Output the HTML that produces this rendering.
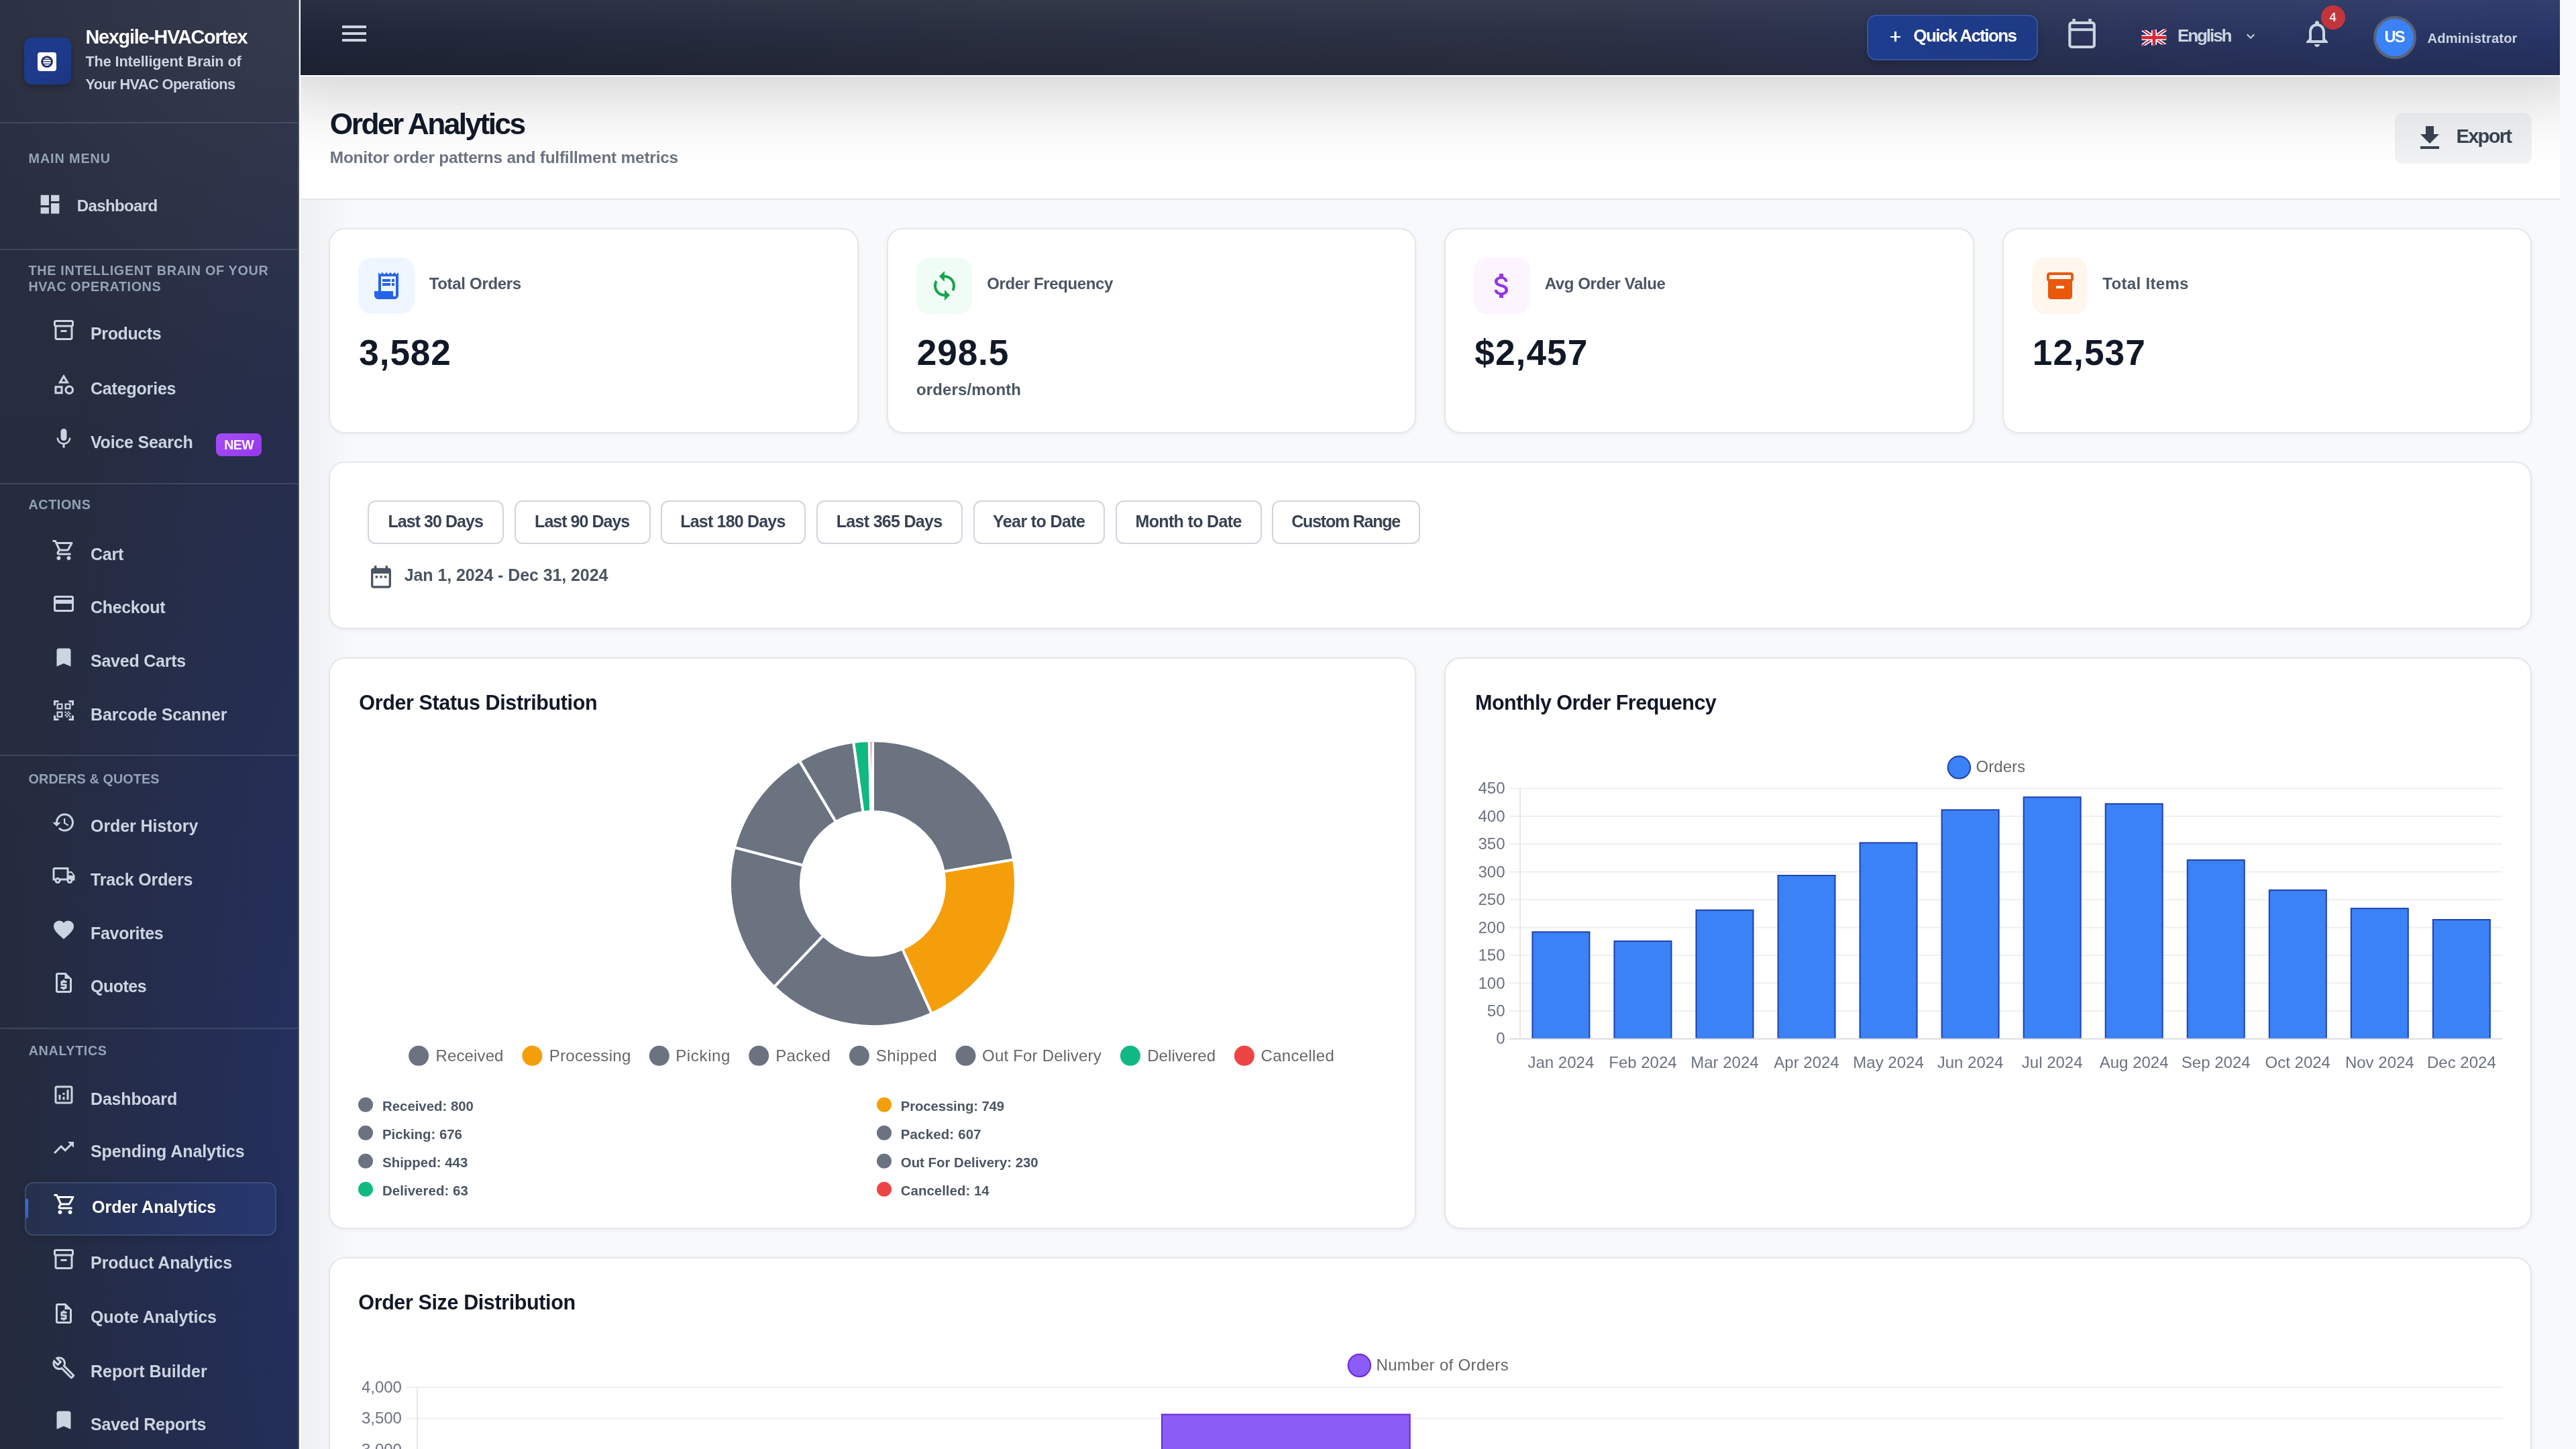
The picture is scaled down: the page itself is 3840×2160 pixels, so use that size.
<!DOCTYPE html><html><head><meta charset="utf-8"><title>Order Analytics</title><style>
*{margin:0;padding:0;box-sizing:border-box}
html,body{width:3840px;height:2160px;overflow:hidden;background:#f8f9fb}
body{position:relative;font-family:"Liberation Sans",sans-serif}
.t{position:absolute;white-space:nowrap;font-family:"Liberation Sans",sans-serif}
.b{position:absolute}
.i{position:absolute;overflow:visible}
svg.abs{position:absolute}
#root{position:absolute;left:0;top:0;width:3840px;height:2160px;will-change:transform}
</style></head><body><div id="root"><div class="b" style="left:0px;top:0px;width:444px;height:2160px;background:radial-gradient(ellipse 540px 1750px at 540px 1750px, rgba(36,50,112,0.80) 0%, rgba(36,50,112,0.38) 50%, rgba(36,50,112,0) 100%),radial-gradient(ellipse 520px 600px at 446px 0px, rgba(62,68,86,0.55) 0%, rgba(62,68,86,0) 100%),linear-gradient(180deg,#2a2f41 0%,#262c3e 35%,#232a3c 100%);"></div>
<div class="b" style="left:444px;top:0px;width:2px;height:2160px;background:#4a505e;"></div>
<div class="b" style="left:446px;top:0px;width:2px;height:2160px;background:#ffffff;"></div>
<div class="b" style="left:36px;top:56px;width:70px;height:70px;border-radius:12px;background:linear-gradient(135deg,#1d3b8e,#1e3a8a 60%,#1c3580);box-shadow:0 4px 10px rgba(0,0,0,0.25);"></div>
<div class="b" style="left:56px;top:78px;width:28px;height:28px;border-radius:4px;background:#fff;"></div>
<svg class="abs" style="left:56px;top:78px;width:28px;height:28px" viewBox="56 78 28 28"><defs><clipPath id="lc"><circle cx="70.05" cy="92" r="6.2"/></clipPath></defs><circle cx="70.05" cy="92" r="7.45" fill="#fff" stroke="#1e2a6b" stroke-width="2.8"/><g clip-path="url(#lc)" stroke="#1e2a6b" stroke-width="1.2"><line x1="60" y1="88.4" x2="80" y2="88.4"/><line x1="60" y1="91.8" x2="80" y2="91.8"/><line x1="60" y1="95.3" x2="80" y2="95.3"/></g></svg>
<div class="t" style="left:127.40px;top:41.32px;font-size:28.8px;line-height:28.8px;color:#ffffff;font-weight:700;letter-spacing:-1.231px;">Nexgile-HVACortex</div>
<div class="t" style="left:127.40px;top:80.85px;font-size:21.8px;line-height:21.8px;color:#cbd5e1;font-weight:700;letter-spacing:-0.161px;">The Intelligent Brain of</div>
<div class="t" style="left:127.40px;top:114.85px;font-size:21.8px;line-height:21.8px;color:#cbd5e1;font-weight:700;letter-spacing:-0.611px;">Your HVAC Operations</div>
<div class="b" style="left:0px;top:182px;width:444px;height:2px;background:rgba(148,163,184,0.22);"></div>
<div class="b" style="left:0px;top:371px;width:444px;height:2px;background:rgba(148,163,184,0.22);"></div>
<div class="b" style="left:0px;top:720px;width:444px;height:2px;background:rgba(148,163,184,0.22);"></div>
<div class="b" style="left:0px;top:1125px;width:444px;height:2px;background:rgba(148,163,184,0.22);"></div>
<div class="b" style="left:0px;top:1532px;width:444px;height:2px;background:rgba(148,163,184,0.22);"></div>
<div class="t" style="left:42.50px;top:227.14px;font-size:19.8px;line-height:19.8px;color:#94a3b8;font-weight:700;letter-spacing:0.912px;">MAIN MENU</div>
<div class="t" style="left:42.50px;top:393.74px;font-size:19.8px;line-height:19.8px;color:#94a3b8;font-weight:700;letter-spacing:0.686px;">THE INTELLIGENT BRAIN OF YOUR</div>
<div class="t" style="left:42.50px;top:418.04px;font-size:19.8px;line-height:19.8px;color:#94a3b8;font-weight:700;letter-spacing:0.550px;">HVAC OPERATIONS</div>
<div class="t" style="left:42.50px;top:743.24px;font-size:19.8px;line-height:19.8px;color:#94a3b8;font-weight:700;letter-spacing:0.567px;">ACTIONS</div>
<div class="t" style="left:42.50px;top:1152.04px;font-size:19.8px;line-height:19.8px;color:#94a3b8;font-weight:700;letter-spacing:0.114px;">ORDERS &amp; QUOTES</div>
<div class="t" style="left:42.70px;top:1557.44px;font-size:19.8px;line-height:19.8px;color:#94a3b8;font-weight:700;letter-spacing:0.625px;">ANALYTICS</div>
<svg class="i" style="left:55.70px;top:285.90px;width:37px;height:37px;" viewBox="0 0 24 24"><path fill="#cbd5e1" d="M3 13h8V3H3v10zm0 8h8v-6H3v6zm10 0h8V11h-8v10zm0-18v6h8V3h-8z"/></svg>
<div class="t" style="left:114.70px;top:295.38px;font-size:24px;line-height:24px;color:#cbd5e1;font-weight:700;letter-spacing:-0.613px;">Dashboard</div>
<svg class="i" style="left:77.00px;top:473.80px;width:36px;height:36px;" viewBox="0 0 24 24"><path fill="#cbd5e1" d="M20 2H4c-1 0-2 .9-2 2v3.01c0 .72.43 1.34 1 1.69V20c0 1.1 1.1 2 2 2h14c.9 0 2-.9 2-2V8.7c.57-.35 1-.97 1-1.69V4c0-1.1-1-2-2-2zm-1 18H5V9h14v11zm1-13H4V4h16v3zM9 12h6v2H9z"/></svg>
<div class="t" style="left:135.00px;top:485.14px;font-size:25px;line-height:25px;color:#cbd5e1;font-weight:700;letter-spacing:-0.386px;">Products</div>
<svg class="i" style="left:77.00px;top:555.30px;width:36px;height:36px;" viewBox="0 0 24 24"><path fill="#cbd5e1" d="M12 2l-5.5 9h11L12 2zm0 3.84L13.93 9h-3.87L12 5.84zM17.5 13c-2.49 0-4.5 2.01-4.5 4.5s2.01 4.5 4.5 4.5 4.5-2.01 4.5-4.5-2.01-4.5-4.5-4.5zm0 7c-1.38 0-2.5-1.12-2.5-2.5s1.12-2.5 2.5-2.5 2.5 1.12 2.5 2.5-1.12 2.5-2.5 2.5zM3 21.5h8v-8H3v8zm2-6h4v4H5v-4z"/></svg>
<div class="t" style="left:135.00px;top:566.64px;font-size:25px;line-height:25px;color:#cbd5e1;font-weight:700;letter-spacing:-0.189px;">Categories</div>
<svg class="i" style="left:77.00px;top:635.50px;width:36px;height:36px;" viewBox="0 0 24 24"><path fill="#cbd5e1" d="M12 14c1.66 0 2.99-1.34 2.99-3L15 5c0-1.66-1.34-3-3-3S9 3.34 9 5v6c0 1.66 1.34 3 3 3zm5.3-3c0 3-2.54 5.1-5.3 5.1S6.7 14 6.7 11H5c0 3.41 2.72 6.23 6 6.72V21h2v-3.28c3.28-.48 6-3.3 6-6.72h-1.7z"/></svg>
<div class="t" style="left:135.00px;top:646.84px;font-size:25px;line-height:25px;color:#cbd5e1;font-weight:700;letter-spacing:-0.218px;">Voice Search</div>
<svg class="i" style="left:77.00px;top:802.30px;width:36px;height:36px;" viewBox="0 0 24 24"><path fill="#cbd5e1" d="M15.55 13c.75 0 1.41-.41 1.75-1.03l3.58-6.49c.37-.66-.11-1.48-.87-1.48H5.21l-.94-2H1v2h2l3.6 7.59-1.35 2.44C4.52 15.37 5.48 17 7 17h12v-2H7l1.1-2h7.45zM6.16 6h12.15l-2.76 5H8.53L6.16 6zM7 18c-1.1 0-1.99.9-1.99 2S5.9 22 7 22s2-.9 2-2-.9-2-2-2zm10 0c-1.1 0-1.99.9-1.99 2s.89 2 1.99 2 2-.9 2-2-.9-2-2-2z"/></svg>
<div class="t" style="left:135.00px;top:813.64px;font-size:25px;line-height:25px;color:#cbd5e1;font-weight:700;letter-spacing:-0.233px;">Cart</div>
<svg class="i" style="left:77.00px;top:881.80px;width:36px;height:36px;" viewBox="0 0 24 24"><path fill="#cbd5e1" d="M20 4H4c-1.11 0-1.99.89-1.99 2L2 18c0 1.11.89 2 2 2h16c1.11 0 2-.89 2-2V6c0-1.11-.89-2-2-2zm0 14H4v-6h16v6zm0-10H4V6h16v2z"/></svg>
<div class="t" style="left:135.00px;top:893.14px;font-size:25px;line-height:25px;color:#cbd5e1;font-weight:700;letter-spacing:-0.343px;">Checkout</div>
<svg class="i" style="left:77.00px;top:961.50px;width:36px;height:36px;" viewBox="0 0 24 24"><path fill="#cbd5e1" d="M17 3H7c-1.1 0-1.99.9-1.99 2L5 21l7-3 7 3V5c0-1.1-.9-2-2-2z"/></svg>
<div class="t" style="left:135.00px;top:972.84px;font-size:25px;line-height:25px;color:#cbd5e1;font-weight:700;letter-spacing:-0.230px;">Saved Carts</div>
<svg class="i" style="left:77.00px;top:1041.20px;width:36px;height:36px;" viewBox="0 0 24 24"><path fill="#cbd5e1" d="M9.5 6.5v3h-3v-3h3M11 5H5v6h6V5zm-1.5 9.5v3h-3v-3h3M11 13H5v6h6v-6zm6.5-6.5v3h-3v-3h3M19 5h-6v6h6V5zm-6 8h1.5v1.5H13V13zm1.5 1.5H16V16h-1.5v-1.5zM16 13h1.5v1.5H16V13zm-3 3h1.5v1.5H13V16zm1.5 1.5H16V19h-1.5v-1.5zM16 16h1.5v1.5H16V16zm1.5-1.5H19V16h-1.5v-1.5zm0 3H19V19h-1.5v-1.5zM22 7h-2V4h-3V2h5v5zm0 15v-5h-2v3h-3v2h5zM2 22h5v-2H4v-3H2v5zM2 2v5h2V4h3V2H2z"/></svg>
<div class="t" style="left:135.00px;top:1052.54px;font-size:25px;line-height:25px;color:#cbd5e1;font-weight:700;letter-spacing:-0.150px;">Barcode Scanner</div>
<svg class="i" style="left:77.00px;top:1207.50px;width:36px;height:36px;" viewBox="0 0 24 24"><path fill="#cbd5e1" d="M13 3c-4.97 0-9 4.03-9 9H1l3.89 3.89.07.14L9 12H6c0-3.87 3.13-7 7-7s7 3.13 7 7-3.13 7-7 7c-1.93 0-3.68-.79-4.94-2.06l-1.42 1.42C8.27 19.99 10.51 21 13 21c4.97 0 9-4.03 9-9s-4.03-9-9-9zm-1 5v5l4.28 2.54.72-1.21-3.5-2.08V8H12z"/></svg>
<div class="t" style="left:135.00px;top:1218.84px;font-size:25px;line-height:25px;color:#cbd5e1;font-weight:700;letter-spacing:-0.067px;">Order History</div>
<svg class="i" style="left:77.00px;top:1287.20px;width:36px;height:36px;" viewBox="0 0 24 24"><path fill="#cbd5e1" d="M20 8h-3V4H3c-1.1 0-2 .9-2 2v11h2c0 1.66 1.34 3 3 3s3-1.34 3-3h6c0 1.66 1.34 3 3 3s3-1.34 3-3h2v-5l-3-4zm-.5 1.5l1.96 2.5H17V9.5h2.5zM6 18c-.55 0-1-.45-1-1s.45-1 1-1 1 .45 1 1-.45 1-1 1zm2.22-3c-.55-.61-1.33-1-2.22-1s-1.67.39-2.22 1H3V6h12v9H8.22zM18 18c-.55 0-1-.45-1-1s.45-1 1-1 1 .45 1 1-.45 1-1 1z"/></svg>
<div class="t" style="left:135.00px;top:1298.54px;font-size:25px;line-height:25px;color:#cbd5e1;font-weight:700;letter-spacing:-0.164px;">Track Orders</div>
<svg class="i" style="left:77.00px;top:1367.50px;width:36px;height:36px;" viewBox="0 0 24 24"><path fill="#cbd5e1" d="M12 21.35l-1.45-1.32C5.4 15.36 2 12.28 2 8.5 2 5.42 4.42 3 7.5 3c1.74 0 3.41.81 4.5 2.09C13.09 3.81 14.76 3 16.5 3 19.58 3 22 5.42 22 8.5c0 3.78-3.4 6.86-8.55 11.54L12 21.35z"/></svg>
<div class="t" style="left:135.00px;top:1378.84px;font-size:25px;line-height:25px;color:#cbd5e1;font-weight:700;letter-spacing:-0.300px;">Favorites</div>
<svg class="i" style="left:77.00px;top:1446.90px;width:36px;height:36px;" viewBox="0 0 24 24"><path fill="#cbd5e1" d="M14 2H6c-1.1 0-1.99.9-1.99 2L4 20c0 1.1.89 2 1.99 2H18c1.1 0 2-.9 2-2V8l-6-6zM6 20V4h7v4h5v12H6zm5-1h2v-1h1c.55 0 1-.45 1-1v-3c0-.55-.45-1-1-1h-3v-1h4v-2h-2V9h-2v1h-1c-.55 0-1 .45-1 1v3c0 .55.45 1 1 1h3v1H9v2h2v1z"/></svg>
<div class="t" style="left:135.00px;top:1458.24px;font-size:25px;line-height:25px;color:#cbd5e1;font-weight:700;letter-spacing:-0.500px;">Quotes</div>
<svg class="i" style="left:77.00px;top:1614.20px;width:36px;height:36px;" viewBox="0 0 24 24"><path fill="#cbd5e1" d="M19 3H5c-1.1 0-2 .9-2 2v14c0 1.1.9 2 2 2h14c1.1 0 2-.9 2-2V5c0-1.1-.9-2-2-2zm0 16H5V5h14v14zM7 12h2v5H7zm8-5h2v10h-2zm-4 7h2v3h-2zm0-4h2v2h-2z"/></svg>
<div class="t" style="left:135.00px;top:1625.54px;font-size:25px;line-height:25px;color:#cbd5e1;font-weight:700;letter-spacing:-0.175px;">Dashboard</div>
<svg class="i" style="left:77.00px;top:1693.00px;width:36px;height:36px;" viewBox="0 0 24 24"><path fill="#cbd5e1" d="M16 6l2.29 2.29-4.88 4.88-4-4L2 16.59 3.41 18l6-6 4 4 6.3-6.29L22 12V6z"/></svg>
<div class="t" style="left:135.00px;top:1704.34px;font-size:25px;line-height:25px;color:#cbd5e1;font-weight:700;letter-spacing:-0.076px;">Spending Analytics</div>
<div class="b" style="left:36.6px;top:1762px;width:375px;height:79.5px;border-radius:13px;background:linear-gradient(90deg,rgba(59,100,200,0.10),rgba(59,100,220,0.16));border:2px solid rgba(140,160,200,0.22);box-shadow:0 4px 12px rgba(0,0,0,0.12);"></div>
<div class="b" style="left:38.1px;top:1787.4px;width:4px;height:28.7px;background:linear-gradient(180deg,#3b6fe0,#3560c8);border-radius:2px;"></div>
<svg class="i" style="left:79.00px;top:1777.40px;width:36px;height:36px;" viewBox="0 0 24 24"><path fill="#ffffff" d="M15.55 13c.75 0 1.41-.41 1.75-1.03l3.58-6.49c.37-.66-.11-1.48-.87-1.48H5.21l-.94-2H1v2h2l3.6 7.59-1.35 2.44C4.52 15.37 5.48 17 7 17h12v-2H7l1.1-2h7.45zM6.16 6h12.15l-2.76 5H8.53L6.16 6zM7 18c-1.1 0-1.99.9-1.99 2S5.9 22 7 22s2-.9 2-2-.9-2-2-2zm10 0c-1.1 0-1.99.9-1.99 2s.89 2 1.99 2 2-.9 2-2-.9-2-2-2z"/></svg>
<div class="t" style="left:137.00px;top:1787.24px;font-size:25px;line-height:25px;color:#ffffff;font-weight:700;">Order Analytics</div>
<svg class="i" style="left:77.00px;top:1858.50px;width:36px;height:36px;" viewBox="0 0 24 24"><path fill="#cbd5e1" d="M20 2H4c-1 0-2 .9-2 2v3.01c0 .72.43 1.34 1 1.69V20c0 1.1 1.1 2 2 2h14c.9 0 2-.9 2-2V8.7c.57-.35 1-.97 1-1.69V4c0-1.1-1-2-2-2zm-1 18H5V9h14v11zm1-13H4V4h16v3zM9 12h6v2H9z"/></svg>
<div class="t" style="left:135.00px;top:1869.84px;font-size:25px;line-height:25px;color:#cbd5e1;font-weight:700;letter-spacing:-0.037px;">Product Analytics</div>
<svg class="i" style="left:77.00px;top:1939.50px;width:36px;height:36px;" viewBox="0 0 24 24"><path fill="#cbd5e1" d="M14 2H6c-1.1 0-1.99.9-1.99 2L4 20c0 1.1.89 2 1.99 2H18c1.1 0 2-.9 2-2V8l-6-6zM6 20V4h7v4h5v12H6zm5-1h2v-1h1c.55 0 1-.45 1-1v-3c0-.55-.45-1-1-1h-3v-1h4v-2h-2V9h-2v1h-1c-.55 0-1 .45-1 1v3c0 .55.45 1 1 1h3v1H9v2h2v1z"/></svg>
<div class="t" style="left:135.00px;top:1950.84px;font-size:25px;line-height:25px;color:#cbd5e1;font-weight:700;letter-spacing:-0.100px;">Quote Analytics</div>
<svg class="i" style="left:77.00px;top:2020.50px;width:36px;height:36px;" viewBox="0 0 24 24"><path fill="#cbd5e1" d="M22.61 18.99l-9.08-9.08c.93-2.34.45-5.1-1.44-7C9.79.61 6.21.4 3.66 2.26L7.5 6.11 6.08 7.52 2.25 3.69C.39 6.23.6 9.82 2.9 12.11c1.86 1.86 4.57 2.35 6.89 1.48l9.11 9.11c.39.39 1.02.39 1.41 0l2.3-2.3c.4-.38.4-1.01 0-1.41zm-3 1.6l-9.46-9.46c-.61.45-1.29.72-2 .82-1.36.2-2.79-.21-3.83-1.25C3.37 9.76 2.93 8.5 3 7.26l3.09 3.09 4.24-4.24-3.09-3.09c1.24-.07 2.49.37 3.44 1.31 1.08 1.08 1.49 2.57 1.24 3.96-.12.71-.42 1.37-.88 1.96l9.45 9.45-.88.89z"/></svg>
<div class="t" style="left:135.00px;top:2031.84px;font-size:25px;line-height:25px;color:#cbd5e1;font-weight:700;">Report Builder</div>
<svg class="i" style="left:77.00px;top:2099.20px;width:36px;height:36px;" viewBox="0 0 24 24"><path fill="#cbd5e1" d="M17 3H7c-1.1 0-1.99.9-1.99 2L5 21l7-3 7 3V5c0-1.1-.9-2-2-2z"/></svg>
<div class="t" style="left:135.00px;top:2110.54px;font-size:25px;line-height:25px;color:#cbd5e1;font-weight:700;letter-spacing:-0.225px;">Saved Reports</div>
<div class="b" style="left:322px;top:646px;width:68px;height:34px;border-radius:8px;background:linear-gradient(135deg,#a64ef8,#9537ec);"></div>
<div class="t" style="left:334.30px;top:654.31px;font-size:19.6px;line-height:19.6px;color:#fdf6ff;font-weight:700;letter-spacing:-0.650px;">NEW</div>
<div class="b" style="left:448px;top:0px;width:3368px;height:112px;background:linear-gradient(90deg,#21273a 0%,#2a2f41 30%,#2d3245 55%,#2c3350 70%,#2b3661 85%,#293668 100%);"></div>
<div class="b" style="left:448px;top:0px;width:3368px;height:112px;background:linear-gradient(180deg,rgba(255,255,255,0.04) 0%,rgba(0,0,0,0.02) 45%,rgba(0,0,0,0.16) 100%);"></div>
<div class="b" style="left:448px;top:112px;width:3368px;height:2px;background:#ffffff;"></div>
<div class="b" style="left:3816px;top:0px;width:24px;height:2160px;background:#f8f9fb;"></div>
<div class="b" style="left:510px;top:38px;width:36px;height:4px;background:#cbd5e1;"></div>
<div class="b" style="left:510px;top:48px;width:36px;height:4px;background:#cbd5e1;"></div>
<div class="b" style="left:510px;top:58px;width:36px;height:4px;background:#cbd5e1;"></div>
<div class="b" style="left:2782.5px;top:22px;width:255px;height:67.5px;border-radius:14px;background:linear-gradient(90deg,#1e3d8f,#1e3a84);border:2px solid #3553a0;box-shadow:0 4px 10px rgba(0,0,0,0.2);"></div>
<div class="b" style="left:2817.7px;top:53.5px;width:15.3px;height:2.4px;background:#fff;"></div>
<div class="b" style="left:2824.2px;top:47px;width:2.4px;height:15.3px;background:#fff;"></div>
<div class="t" style="left:2852.30px;top:39.99px;font-size:26px;line-height:26px;color:#ffffff;font-weight:700;letter-spacing:-1.592px;">Quick Actions</div>
<svg class="abs" style="left:3080px;top:26px;width:48px;height:50px" viewBox="3080 26 48 50"><rect x="3085.35" y="34.05" width="36.5" height="35.9" rx="3" fill="none" stroke="#cbd5e1" stroke-width="4.1"/><rect x="3085" y="42.2" width="37" height="4" fill="#cbd5e1"/><rect x="3089.3" y="28" width="4.5" height="6" fill="#cbd5e1"/><rect x="3113.3" y="28" width="4.5" height="6" fill="#cbd5e1"/></svg>
<svg class="abs" style="left:3192px;top:42px;width:38px;height:28px" viewBox="0 0 38 28"><defs><clipPath id="fl"><path d="M0.7,3.5 C7,1.5 12,4.2 19,2.6 C26,1 31,2.3 37.3,0.8 L37.3,23.8 C31,25.3 26,23.5 19,25.2 C12,26.8 7,24.5 0.7,26.6 Z"/></clipPath></defs><g clip-path="url(#fl)"><rect width="38" height="28" fill="#1d2f70"/><path d="M0,1 38,27 M38,1 0,27" stroke="#fff" stroke-width="5.5"/><path d="M0,1 38,27 M38,1 0,27" stroke="#c8202f" stroke-width="2"/><path d="M19,0 v28 M0,14 h38" stroke="#fff" stroke-width="8"/><path d="M19,0 v28 M0,14 h38" stroke="#d32a3a" stroke-width="4.8"/></g></svg>
<div class="t" style="left:3246.00px;top:39.99px;font-size:26px;line-height:26px;color:#cbd5e1;font-weight:700;letter-spacing:-2.083px;">English</div>
<svg class="i" style="left:3342.80px;top:41.60px;width:24px;height:24px;" viewBox="0 0 24 24"><path fill="#cbd5e1" d="M16.59 8.59L12 13.17 7.41 8.59 6 10l6 6 6-6z"/></svg>
<svg class="i" style="left:3430.00px;top:26.00px;width:48px;height:48px;" viewBox="0 0 24 24"><path fill="#cbd5e1" d="M12 22c1.1 0 2-.9 2-2h-4c0 1.1.89 2 2 2zm6-6v-5c0-3.07-1.64-5.64-4.5-6.32V4c0-.83-.67-1.5-1.5-1.5s-1.5.67-1.5 1.5v.68C7.63 5.36 6 7.92 6 11v5l-2 2v1h16v-1l-2-2zm-2 1H8v-6c0-2.48 1.51-4.5 4-4.5s4 2.02 4 4.5v6z"/></svg>
<svg class="abs" style="left:3460px;top:8px;width:36px;height:36px" viewBox="0 0 36 36"><circle cx="18" cy="18" r="18" fill="#c1353b"/></svg>
<div class="t" style="left:3472.60px;top:16.76px;font-size:18px;line-height:18px;color:#ebe3e6;font-weight:700;">4</div>
<svg class="abs" style="left:3538px;top:24px;width:64px;height:64px" viewBox="0 0 64 64"><circle cx="32" cy="32" r="30" fill="#3b82f6" stroke="#5a6378" stroke-width="4"/></svg>
<div class="t" style="left:3554.60px;top:44.34px;font-size:23.7px;line-height:23.7px;color:#ffffff;font-weight:700;letter-spacing:-2.000px;">US</div>
<div class="t" style="left:3618.50px;top:46.50px;font-size:20.2px;line-height:20.2px;color:#cbd5e1;font-weight:700;letter-spacing:0.133px;">Administrator</div>
<div class="b" style="left:448px;top:114px;width:3368px;height:182px;overflow:hidden;background:#fff"><div class="b" style="left:-60px;top:-114px;width:3488px;height:114px;background:#222;box-shadow:0 14px 120px rgba(0,0,0,0.235)"></div></div>
<div class="b" style="left:448px;top:296px;width:3368px;height:2px;background:#e5e7eb;"></div>
<div class="b" style="left:448px;top:298px;width:80px;height:1862px;background:linear-gradient(90deg,rgba(0,0,0,0.035),rgba(0,0,0,0));"></div>
<div class="t" style="left:491.80px;top:162.80px;font-size:44.3px;line-height:44.3px;color:#111827;font-weight:700;letter-spacing:-2.557px;">Order Analytics</div>
<div class="t" style="left:491.80px;top:223.35px;font-size:24.4px;line-height:24.4px;color:#6b7280;font-weight:700;letter-spacing:-0.204px;">Monitor order patterns and fulfillment metrics</div>
<div class="b" style="left:3570.4px;top:168.2px;width:203.2px;height:75.7px;border-radius:12px;background:linear-gradient(180deg,#e4e6e9,#f1f2f4);"></div>
<svg class="i" style="left:3598.00px;top:182.00px;width:48px;height:48px;" viewBox="0 0 24 24"><path fill="#374151" d="M19 9h-4V3H9v6H5l7 7 7-7zM5 18v2h14v-2H5z"/></svg>
<div class="t" style="left:3661.50px;top:189.45px;font-size:29px;line-height:29px;color:#374151;font-weight:700;letter-spacing:-1.680px;">Export</div>
<div class="b" style="left:490px;top:340px;width:789.5px;height:306px;background:#ffffff;border:2px solid #e5e7eb;border-radius:24px;box-shadow:0 2px 6px rgba(17,24,39,0.05);"></div>
<div class="b" style="left:534.4px;top:384px;width:83.5px;height:83.5px;border-radius:20px;background:#eff6ff;"></div>
<svg class="i" style="left:552.15px;top:402.00px;width:48px;height:48px;" viewBox="0 0 24 24"><path fill="#2563eb" d="M19.5 3.5L18 2l-1.5 1.5L15 2l-1.5 1.5L12 2l-1.5 1.5L9 2 7.5 3.5 6 2v14H3v3c0 1.66 1.34 3 3 3h12c1.66 0 3-1.34 3-3V2l-1.5 1.5zM19 19c0 .55-.45 1-1 1s-1-.45-1-1v-3H8V5h11v14zM9 7h6v2H9zM16 7h2v2h-2zM9 10h6v2H9zM16 10h2v2h-2z"/></svg>
<div class="t" style="left:639.70px;top:411.38px;font-size:24px;line-height:24px;color:#4b5563;font-weight:700;letter-spacing:-0.309px;">Total Orders</div>
<div class="t" style="left:535.30px;top:499.07px;font-size:53.2px;line-height:53.2px;color:#111827;font-weight:700;letter-spacing:0.875px;">3,582</div>
<div class="b" style="left:1321.5px;top:340px;width:789.5px;height:306px;background:#ffffff;border:2px solid #e5e7eb;border-radius:24px;box-shadow:0 2px 6px rgba(17,24,39,0.05);"></div>
<div class="b" style="left:1365.9px;top:384px;width:83.5px;height:83.5px;border-radius:20px;background:#f0fdf4;"></div>
<svg class="i" style="left:1383.65px;top:402.00px;width:48px;height:48px;" viewBox="0 0 24 24"><path fill="#16a34a" d="M12 4V1L8 5l4 4V6c3.31 0 6 2.69 6 6 0 1.01-.25 1.97-.7 2.8l1.46 1.46C19.54 15.03 20 13.57 20 12c0-4.42-3.58-8-8-8zm0 14c-3.31 0-6-2.69-6-6 0-1.01.25-1.97.7-2.8L5.24 7.74C4.46 8.97 4 10.43 4 12c0 4.42 3.58 8 8 8v3l4-4-4-4v3z"/></svg>
<div class="t" style="left:1471.20px;top:411.38px;font-size:24px;line-height:24px;color:#4b5563;font-weight:700;letter-spacing:-0.379px;">Order Frequency</div>
<div class="t" style="left:1366.80px;top:499.07px;font-size:53.2px;line-height:53.2px;color:#111827;font-weight:700;letter-spacing:0.850px;">298.5</div>
<div class="t" style="left:1366.10px;top:569.28px;font-size:24px;line-height:24px;color:#4b5563;font-weight:700;letter-spacing:0.109px;">orders/month</div>
<div class="b" style="left:2153px;top:340px;width:789.5px;height:306px;background:#ffffff;border:2px solid #e5e7eb;border-radius:24px;box-shadow:0 2px 6px rgba(17,24,39,0.05);"></div>
<div class="b" style="left:2197.4px;top:384px;width:83.5px;height:83.5px;border-radius:20px;background:#fcf4ff;"></div>
<svg class="i" style="left:2215.15px;top:402.00px;width:48px;height:48px;" viewBox="0 0 24 24"><path fill="#9333ea" d="M11.8 10.9c-2.27-.59-3-1.2-3-2.15 0-1.09 1.01-1.85 2.7-1.85 1.78 0 2.44.85 2.5 2.1h2.21c-.07-1.72-1.12-3.3-3.21-3.81V3h-3v2.16c-1.94.42-3.5 1.68-3.5 3.61 0 2.31 1.91 3.46 4.7 4.13 2.5.6 3 1.48 3 2.41 0 .69-.49 1.79-2.7 1.79-2.06 0-2.87-.92-2.98-2.1h-2.2c.12 2.19 1.76 3.42 3.68 3.83V21h3v-2.15c1.95-.37 3.5-1.5 3.5-3.55 0-2.84-2.43-3.81-4.7-4.4z"/></svg>
<div class="t" style="left:2302.70px;top:411.38px;font-size:24px;line-height:24px;color:#4b5563;font-weight:700;letter-spacing:-0.400px;">Avg Order Value</div>
<div class="t" style="left:2198.30px;top:499.07px;font-size:53.2px;line-height:53.2px;color:#111827;font-weight:700;letter-spacing:1.060px;">$2,457</div>
<div class="b" style="left:2984.5px;top:340px;width:789.5px;height:306px;background:#ffffff;border:2px solid #e5e7eb;border-radius:24px;box-shadow:0 2px 6px rgba(17,24,39,0.05);"></div>
<div class="b" style="left:3028.9px;top:384px;width:83.5px;height:83.5px;border-radius:20px;background:#fff7ed;"></div>
<svg class="i" style="left:3046.65px;top:402.00px;width:48px;height:48px;" viewBox="0 0 24 24"><path fill="#ea580c" d="M20 2H4c-1 0-2 .9-2 2v3.01c0 .72.43 1.34 1 1.69V20c0 1.1 1.1 2 2 2h14c.9 0 2-.9 2-2V8.7c.57-.35 1-.97 1-1.69V4c0-1.1-1-2-2-2zm-5 12H9v-2h6v2zm5-7H4V4l16-.02V7z"/></svg>
<div class="t" style="left:3134.20px;top:411.38px;font-size:24px;line-height:24px;color:#4b5563;font-weight:700;letter-spacing:0.330px;">Total Items</div>
<div class="t" style="left:3029.80px;top:499.07px;font-size:53.2px;line-height:53.2px;color:#111827;font-weight:700;letter-spacing:1.060px;">12,537</div>
<div class="b" style="left:490px;top:688px;width:3284px;height:250px;background:#ffffff;border:2px solid #e5e7eb;border-radius:24px;box-shadow:0 2px 6px rgba(17,24,39,0.05);"></div>
<div class="b" style="left:548.3px;top:746px;width:202.70000000000005px;height:65.4px;border:2px solid #d1d5db;border-radius:12px;background:#fff;"></div>
<div class="t" style="left:578.40px;top:765.04px;font-size:25px;line-height:25px;color:#374151;font-weight:700;letter-spacing:-0.945px;">Last 30 Days</div>
<div class="b" style="left:766.6px;top:746px;width:203.19999999999993px;height:65.4px;border:2px solid #d1d5db;border-radius:12px;background:#fff;"></div>
<div class="t" style="left:797.10px;top:765.04px;font-size:25px;line-height:25px;color:#374151;font-weight:700;letter-spacing:-0.973px;">Last 90 Days</div>
<div class="b" style="left:984.7px;top:746px;width:216.29999999999995px;height:65.4px;border:2px solid #d1d5db;border-radius:12px;background:#fff;"></div>
<div class="t" style="left:1014.30px;top:765.04px;font-size:25px;line-height:25px;color:#374151;font-weight:700;letter-spacing:-0.808px;">Last 180 Days</div>
<div class="b" style="left:1216.8px;top:746px;width:218.4000000000001px;height:65.4px;border:2px solid #d1d5db;border-radius:12px;background:#fff;"></div>
<div class="t" style="left:1246.80px;top:765.04px;font-size:25px;line-height:25px;color:#374151;font-weight:700;letter-spacing:-0.700px;">Last 365 Days</div>
<div class="b" style="left:1450.8px;top:746px;width:196.5px;height:65.4px;border:2px solid #d1d5db;border-radius:12px;background:#fff;"></div>
<div class="t" style="left:1480.10px;top:765.04px;font-size:25px;line-height:25px;color:#374151;font-weight:700;letter-spacing:-0.600px;">Year to Date</div>
<div class="b" style="left:1662.5px;top:746px;width:218.79999999999995px;height:65.4px;border:2px solid #d1d5db;border-radius:12px;background:#fff;"></div>
<div class="t" style="left:1692.50px;top:765.04px;font-size:25px;line-height:25px;color:#374151;font-weight:700;letter-spacing:-0.650px;">Month to Date</div>
<div class="b" style="left:1896.2px;top:746px;width:221.10000000000014px;height:65.4px;border:2px solid #d1d5db;border-radius:12px;background:#fff;"></div>
<div class="t" style="left:1925.30px;top:765.04px;font-size:25px;line-height:25px;color:#374151;font-weight:700;letter-spacing:-1.227px;">Custom Range</div>
<svg class="i" style="left:548.00px;top:839.70px;width:40px;height:40px;" viewBox="0 0 24 24"><path fill="#4b5563" d="M9 11H7v2h2v-2zm4 0h-2v2h2v-2zm4 0h-2v2h2v-2zm2-7h-1V2h-2v2H8V2H6v2H5c-1.11 0-1.99.9-1.99 2L3 20c0 1.1.89 2 2 2h14c1.1 0 2-.9 2-2V6c0-1.1-.9-2-2-2zm0 16H5V9h14v11z"/></svg>
<div class="t" style="left:602.70px;top:845.14px;font-size:25px;line-height:25px;color:#4b5563;font-weight:700;letter-spacing:-0.084px;">Jan 1, 2024 - Dec 31, 2024</div>
<div class="b" style="left:490px;top:980px;width:1621px;height:852px;background:#ffffff;border:2px solid #e5e7eb;border-radius:24px;box-shadow:0 2px 6px rgba(17,24,39,0.05);"></div>
<div class="t" style="left:535.30px;top:1031.78px;font-size:30.5px;line-height:30.5px;color:#111827;font-weight:700;letter-spacing:-0.379px;">Order Status Distribution</div>
<svg class="abs" style="left:1071px;top:1087px;width:460px;height:460px" viewBox="1071 1087 460 460"><path d="M1301.00,1104.00 A213,213 0 0 1 1511.02,1281.49 L1406.50,1299.16 A107,107 0 0 0 1301.00,1210.00 Z" fill="#6b7280" stroke="#ffffff" stroke-width="4" stroke-linejoin="bevel"/><path d="M1511.02,1281.49 A213,213 0 0 1 1388.73,1511.10 L1345.07,1414.50 A107,107 0 0 0 1406.50,1299.16 Z" fill="#f59e0b" stroke="#ffffff" stroke-width="4" stroke-linejoin="bevel"/><path d="M1388.73,1511.10 A213,213 0 0 1 1154.06,1471.20 L1227.19,1394.46 A107,107 0 0 0 1345.07,1414.50 Z" fill="#6b7280" stroke="#ffffff" stroke-width="4" stroke-linejoin="bevel"/><path d="M1154.06,1471.20 A213,213 0 0 1 1094.90,1263.23 L1197.47,1289.99 A107,107 0 0 0 1227.19,1394.46 Z" fill="#6b7280" stroke="#ffffff" stroke-width="4" stroke-linejoin="bevel"/><path d="M1094.90,1263.23 A213,213 0 0 1 1191.76,1134.14 L1246.12,1225.14 A107,107 0 0 0 1197.47,1289.99 Z" fill="#6b7280" stroke="#ffffff" stroke-width="4" stroke-linejoin="bevel"/><path d="M1191.76,1134.14 A213,213 0 0 1 1272.32,1105.94 L1286.59,1210.97 A107,107 0 0 0 1246.12,1225.14 Z" fill="#6b7280" stroke="#ffffff" stroke-width="4" stroke-linejoin="bevel"/><path d="M1272.32,1105.94 A213,213 0 0 1 1295.77,1104.06 L1298.37,1210.03 A107,107 0 0 0 1286.59,1210.97 Z" fill="#10b981" stroke="#ffffff" stroke-width="4" stroke-linejoin="bevel"/><path d="M1295.77,1104.06 A213,213 0 0 1 1301.00,1104.00 L1301.00,1210.00 A107,107 0 0 0 1298.37,1210.03 Z" fill="#ef4444" stroke="#ffffff" stroke-width="4" stroke-linejoin="bevel"/></svg>
<div class="t" style="left:649.60px;top:1561.68px;font-size:24px;line-height:24px;color:#666666;letter-spacing:0.114px;">Received</div>
<div class="t" style="left:818.70px;top:1561.68px;font-size:24px;line-height:24px;color:#666666;letter-spacing:0.322px;">Processing</div>
<div class="t" style="left:1007.20px;top:1561.68px;font-size:24px;line-height:24px;color:#666666;letter-spacing:0.650px;">Picking</div>
<div class="t" style="left:1156.20px;top:1561.68px;font-size:24px;line-height:24px;color:#666666;letter-spacing:0.320px;">Packed</div>
<div class="t" style="left:1305.70px;top:1561.68px;font-size:24px;line-height:24px;color:#666666;letter-spacing:0.467px;">Shipped</div>
<div class="t" style="left:1464.10px;top:1561.68px;font-size:24px;line-height:24px;color:#666666;letter-spacing:0.193px;">Out For Delivery</div>
<div class="t" style="left:1710.20px;top:1561.68px;font-size:24px;line-height:24px;color:#666666;letter-spacing:0.062px;">Delivered</div>
<div class="t" style="left:1879.50px;top:1561.68px;font-size:24px;line-height:24px;color:#666666;letter-spacing:0.312px;">Cancelled</div>
<div class="t" style="left:570.00px;top:1638.73px;font-size:20.4px;line-height:20.4px;color:#4b5563;font-weight:700;letter-spacing:-0.008px;">Received: 800</div>
<div class="t" style="left:1342.80px;top:1638.73px;font-size:20.4px;line-height:20.4px;color:#4b5563;font-weight:700;letter-spacing:-0.150px;">Processing: 749</div>
<div class="t" style="left:570.00px;top:1680.73px;font-size:20.4px;line-height:20.4px;color:#4b5563;font-weight:700;letter-spacing:-0.009px;">Picking: 676</div>
<div class="t" style="left:1342.80px;top:1680.73px;font-size:20.4px;line-height:20.4px;color:#4b5563;font-weight:700;letter-spacing:0.190px;">Packed: 607</div>
<div class="t" style="left:570.00px;top:1722.73px;font-size:20.4px;line-height:20.4px;color:#4b5563;font-weight:700;letter-spacing:0.036px;">Shipped: 443</div>
<div class="t" style="left:1342.80px;top:1722.73px;font-size:20.4px;line-height:20.4px;color:#4b5563;font-weight:700;letter-spacing:-0.010px;">Out For Delivery: 230</div>
<div class="t" style="left:570.00px;top:1764.73px;font-size:20.4px;line-height:20.4px;color:#4b5563;font-weight:700;letter-spacing:0.067px;">Delivered: 63</div>
<div class="t" style="left:1342.80px;top:1764.73px;font-size:20.4px;line-height:20.4px;color:#4b5563;font-weight:700;letter-spacing:0.033px;">Cancelled: 14</div>
<div class="b" style="left:2153px;top:980px;width:1621px;height:852px;background:#ffffff;border:2px solid #e5e7eb;border-radius:24px;box-shadow:0 2px 6px rgba(17,24,39,0.05);"></div>
<div class="t" style="left:2199.10px;top:1031.78px;font-size:30.5px;line-height:30.5px;color:#111827;font-weight:700;letter-spacing:-0.518px;">Monthly Order Frequency</div>
<div class="t" style="left:2945.50px;top:1131.28px;font-size:24px;line-height:24px;color:#666666;letter-spacing:0.040px;">Orders</div>
<div class="t" style="left:2230.20px;top:1536.48px;font-size:24px;line-height:24px;color:#6b7280;">0</div>
<div class="t" style="left:2216.80px;top:1495.00px;font-size:24px;line-height:24px;color:#6b7280;">50</div>
<div class="t" style="left:2203.50px;top:1453.52px;font-size:24px;line-height:24px;color:#6b7280;">100</div>
<div class="t" style="left:2203.50px;top:1412.04px;font-size:24px;line-height:24px;color:#6b7280;">150</div>
<div class="t" style="left:2203.50px;top:1370.56px;font-size:24px;line-height:24px;color:#6b7280;">200</div>
<div class="t" style="left:2203.50px;top:1329.08px;font-size:24px;line-height:24px;color:#6b7280;">250</div>
<div class="t" style="left:2203.50px;top:1287.60px;font-size:24px;line-height:24px;color:#6b7280;">300</div>
<div class="t" style="left:2203.50px;top:1246.12px;font-size:24px;line-height:24px;color:#6b7280;">350</div>
<div class="t" style="left:2203.50px;top:1204.64px;font-size:24px;line-height:24px;color:#6b7280;">400</div>
<div class="t" style="left:2203.50px;top:1163.16px;font-size:24px;line-height:24px;color:#6b7280;">450</div>
<div class="t" style="left:2277.50px;top:1572.38px;font-size:24px;line-height:24px;color:#6b7280;">Jan 2024</div>
<div class="t" style="left:2398.24px;top:1572.38px;font-size:24px;line-height:24px;color:#6b7280;">Feb 2024</div>
<div class="t" style="left:2520.28px;top:1572.38px;font-size:24px;line-height:24px;color:#6b7280;">Mar 2024</div>
<div class="t" style="left:2644.32px;top:1572.38px;font-size:24px;line-height:24px;color:#6b7280;">Apr 2024</div>
<div class="t" style="left:2762.36px;top:1572.38px;font-size:24px;line-height:24px;color:#6b7280;">May 2024</div>
<div class="t" style="left:2887.70px;top:1572.38px;font-size:24px;line-height:24px;color:#6b7280;">Jun 2024</div>
<div class="t" style="left:3013.79px;top:1572.38px;font-size:24px;line-height:24px;color:#6b7280;">Jul 2024</div>
<div class="t" style="left:3129.78px;top:1572.38px;font-size:24px;line-height:24px;color:#6b7280;">Aug 2024</div>
<div class="t" style="left:3251.82px;top:1572.38px;font-size:24px;line-height:24px;color:#6b7280;">Sep 2024</div>
<div class="t" style="left:3376.56px;top:1572.38px;font-size:24px;line-height:24px;color:#6b7280;">Oct 2024</div>
<div class="t" style="left:3495.95px;top:1572.38px;font-size:24px;line-height:24px;color:#6b7280;">Nov 2024</div>
<div class="t" style="left:3617.99px;top:1572.38px;font-size:24px;line-height:24px;color:#6b7280;">Dec 2024</div>
<div class="b" style="left:490px;top:1874px;width:3284px;height:400px;background:#ffffff;border:2px solid #e5e7eb;border-radius:24px;box-shadow:0 2px 6px rgba(17,24,39,0.05);"></div>
<div class="t" style="left:534.30px;top:1926.38px;font-size:30.5px;line-height:30.5px;color:#111827;font-weight:700;letter-spacing:-0.382px;">Order Size Distribution</div>
<div class="t" style="left:2051.50px;top:2023.28px;font-size:24px;line-height:24px;color:#666666;letter-spacing:0.340px;">Number of Orders</div>
<div class="t" style="left:538.90px;top:2055.98px;font-size:24px;line-height:24px;color:#6b7280;">4,000</div>
<div class="t" style="left:538.90px;top:2102.48px;font-size:24px;line-height:24px;color:#6b7280;">3,500</div>
<div class="t" style="left:538.90px;top:2148.98px;font-size:24px;line-height:24px;color:#6b7280;">3,000</div>
<svg class="abs" style="left:0;top:0;width:3840px;height:2160px;pointer-events:none" viewBox="0 0 3840 2160"><circle cx="624.1" cy="1573.8" r="15" fill="#6b7280"/><circle cx="793.4" cy="1573.8" r="15" fill="#f59e0b"/><circle cx="982.8" cy="1573.8" r="15" fill="#6b7280"/><circle cx="1131.2" cy="1573.8" r="15" fill="#6b7280"/><circle cx="1280.9" cy="1573.8" r="15" fill="#6b7280"/><circle cx="1439.5" cy="1573.8" r="15" fill="#6b7280"/><circle cx="1684.9" cy="1573.8" r="15" fill="#10b981"/><circle cx="1854.9" cy="1573.8" r="15" fill="#ef4444"/><circle cx="545" cy="1646.8" r="11" fill="#6b7280"/><circle cx="1318" cy="1646.8" r="11" fill="#f59e0b"/><circle cx="545" cy="1688.8" r="11" fill="#6b7280"/><circle cx="1318" cy="1688.8" r="11" fill="#6b7280"/><circle cx="545" cy="1730.8" r="11" fill="#6b7280"/><circle cx="1318" cy="1730.8" r="11" fill="#6b7280"/><circle cx="545" cy="1772.8" r="11" fill="#10b981"/><circle cx="1318" cy="1772.8" r="11" fill="#ef4444"/><circle cx="2920.4" cy="1143.9" r="16.7" fill="#3b82f6" stroke="#1e40af" stroke-width="2"/><rect x="2250" y="1547.60" width="1480" height="2" fill="#d9dbe0"/><rect x="2250" y="1506.12" width="1480" height="2" fill="#eeeff1"/><rect x="2250" y="1464.64" width="1480" height="2" fill="#eeeff1"/><rect x="2250" y="1423.16" width="1480" height="2" fill="#eeeff1"/><rect x="2250" y="1381.68" width="1480" height="2" fill="#eeeff1"/><rect x="2250" y="1340.20" width="1480" height="2" fill="#eeeff1"/><rect x="2250" y="1298.72" width="1480" height="2" fill="#eeeff1"/><rect x="2250" y="1257.24" width="1480" height="2" fill="#eeeff1"/><rect x="2250" y="1215.76" width="1480" height="2" fill="#eeeff1"/><rect x="2250" y="1174.28" width="1480" height="2" fill="#eeeff1"/><rect x="2265" y="1174.28" width="2" height="375.32" fill="#e5e7eb"/><rect x="2283.40" y="1388.30" width="87" height="159.30" fill="#1e40af"/><rect x="2285.40" y="1390.30" width="83" height="157.30" fill="#3b82f6"/><rect x="2405.44" y="1402.00" width="87" height="145.60" fill="#1e40af"/><rect x="2407.44" y="1404.00" width="83" height="143.60" fill="#3b82f6"/><rect x="2527.48" y="1355.70" width="87" height="191.90" fill="#1e40af"/><rect x="2529.48" y="1357.70" width="83" height="189.90" fill="#3b82f6"/><rect x="2649.52" y="1304.10" width="87" height="243.50" fill="#1e40af"/><rect x="2651.52" y="1306.10" width="83" height="241.50" fill="#3b82f6"/><rect x="2771.56" y="1255.40" width="87" height="292.20" fill="#1e40af"/><rect x="2773.56" y="1257.40" width="83" height="290.20" fill="#3b82f6"/><rect x="2893.60" y="1206.30" width="87" height="341.30" fill="#1e40af"/><rect x="2895.60" y="1208.30" width="83" height="339.30" fill="#3b82f6"/><rect x="3015.64" y="1187.30" width="87" height="360.30" fill="#1e40af"/><rect x="3017.64" y="1189.30" width="83" height="358.30" fill="#3b82f6"/><rect x="3137.68" y="1197.30" width="87" height="350.30" fill="#1e40af"/><rect x="3139.68" y="1199.30" width="83" height="348.30" fill="#3b82f6"/><rect x="3259.72" y="1281.10" width="87" height="266.50" fill="#1e40af"/><rect x="3261.72" y="1283.10" width="83" height="264.50" fill="#3b82f6"/><rect x="3381.76" y="1325.90" width="87" height="221.70" fill="#1e40af"/><rect x="3383.76" y="1327.90" width="83" height="219.70" fill="#3b82f6"/><rect x="3503.80" y="1353.20" width="87" height="194.40" fill="#1e40af"/><rect x="3505.80" y="1355.20" width="83" height="192.40" fill="#3b82f6"/><rect x="3625.84" y="1370.00" width="87" height="177.60" fill="#1e40af"/><rect x="3627.84" y="1372.00" width="83" height="175.60" fill="#3b82f6"/><circle cx="2026.4" cy="2035.5" r="16.7" fill="#8b5cf6" stroke="#6d28d9" stroke-width="2"/><rect x="606" y="2067.00" width="3125" height="2" fill="#eeeff1"/><rect x="606" y="2113.50" width="3125" height="2" fill="#eeeff1"/><rect x="606" y="2160.00" width="3125" height="2" fill="#eeeff1"/><rect x="621" y="2067" width="2" height="100" fill="#e5e7eb"/><rect x="1731" y="2107.5" width="371.7" height="60" fill="#6d28d9"/><rect x="1733" y="2109.5" width="367.7" height="60" fill="#8b5cf6"/></svg></div><script>(function(){var w=window.innerWidth;if(w&&Math.abs(w-3840)>2){var z=w/3840;var r=document.getElementById("root");r.style.zoom=z;var d=document.documentElement,b=document.body;d.style.width=b.style.width=w+"px";d.style.height=b.style.height=Math.round(2160*z)+"px";}})();</script></body></html>
